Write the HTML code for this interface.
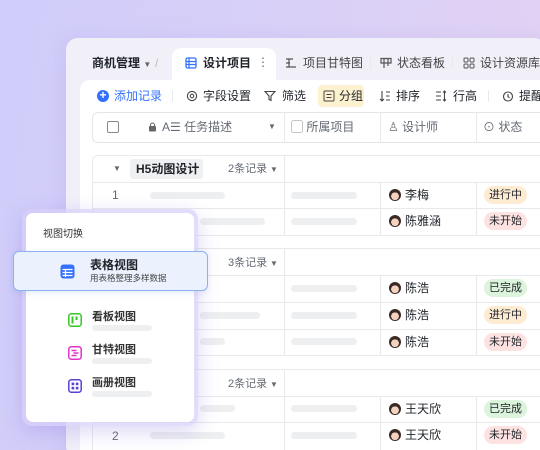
<!DOCTYPE html>
<html><head><meta charset="utf-8"><style>
*{margin:0;padding:0;box-sizing:border-box}
html,body{width:540px;height:450px;overflow:hidden}
body{position:relative;font-family:"Liberation Sans","Noto Sans CJK SC",sans-serif;background:linear-gradient(100deg,#cfcdfa 0%,#d9d0f7 50%,#e3d2f3 100%);color:#1f2329}
.a{position:absolute}
.win{left:66px;top:38px;width:480px;height:420px;background:#f1f0f9;border-radius:12px;box-shadow:0 4px 20px rgba(120,100,200,.15)}
.panel{left:80px;top:80px;width:460px;height:370px;background:#fff;border-radius:10px 0 0 0}
.t{font-size:12px;white-space:nowrap;line-height:14px}
.g{color:#646a73}
.bar{background:#eeeff1;height:7px;border-radius:4px}
.line{background:#e8e9eb;height:1px}
.vl{background:#e8e9eb;width:1px}
.tag{font-size:11px;line-height:18px;height:18px;padding:0 5px;border-radius:9px}
.av{width:12px;height:12px;border-radius:50%;background:radial-gradient(circle at 50% 60%,#f3d2bf 0 40%,#3a2a26 42%);}
</style></head><body>
<div class="a win"></div>
<!-- tabs -->
<div class="a t" style="left:92px;top:56px;font-weight:bold;font-size:12px">商机管理 <span style="font-size:8px;color:#666">▼</span></div>
<div class="a t" style="left:155px;top:56px;color:#bbb">/</div>
<div class="a" style="left:172px;top:48px;width:104px;height:34px;background:#fff;border-radius:9px 9px 0 0"></div>
<svg class="a" style="left:185px;top:57px" width="12" height="12" viewBox="0 0 12 12"><rect x="1" y="1" width="10" height="10" rx="1.5" fill="none" stroke="#3370ff" stroke-width="1.3"/><path d="M1 4.5H11M1 7.5H11M4 1V11" stroke="#3370ff" stroke-width="1.2"/></svg>
<div class="a t" style="left:203px;top:56px;font-weight:bold">设计项目</div>
<div class="a t g" style="left:257px;top:55px">⋮</div>
<svg class="a" style="left:285px;top:57px" width="12" height="12" viewBox="0 0 12 12"><path d="M1 2H8M1 6H5M1 10H11M4 2V10" stroke="#555" stroke-width="1.2" fill="none"/></svg>
<div class="a t g" style="left:303px;top:56px;color:#444">项目甘特图</div>
<div class="a vl" style="left:370px;top:55px;height:14px"></div>
<svg class="a" style="left:380px;top:57px" width="12" height="12" viewBox="0 0 12 12"><path d="M1 1.5H11V6H1ZM4 1.5V11M8 1.5V9" stroke="#555" stroke-width="1.2" fill="none"/></svg>
<div class="a t" style="left:397px;top:56px;color:#444">状态看板</div>
<div class="a vl" style="left:452px;top:55px;height:14px"></div>
<svg class="a" style="left:463px;top:57px" width="12" height="12" viewBox="0 0 12 12"><rect x="1" y="1" width="4" height="4" rx="1" fill="none" stroke="#555"/><rect x="7" y="1" width="4" height="4" rx="1" fill="none" stroke="#555"/><rect x="1" y="7" width="4" height="4" rx="1" fill="none" stroke="#555"/><rect x="7" y="7" width="4" height="4" rx="1" fill="none" stroke="#555"/></svg>
<div class="a t" style="left:480px;top:56px;color:#444">设计资源库</div>
<div class="a panel"></div>
<!-- toolbar -->
<div class="a" style="left:97px;top:90px;width:12px;height:12px;border-radius:50%;background:#3370ff;color:#fff;font-size:12px;line-height:11px;text-align:center;font-weight:bold">+</div>
<div class="a t" style="left:114px;top:89px;color:#3370ff">添加记录</div>
<div class="a vl" style="left:172px;top:90px;height:12px"></div>
<svg class="a" style="left:186px;top:90px" width="12" height="12" viewBox="0 0 12 12"><circle cx="6" cy="6" r="4.6" fill="none" stroke="#444" stroke-width="1.1"/><circle cx="6" cy="6" r="1.8" fill="none" stroke="#444" stroke-width="1.1"/></svg>
<div class="a t" style="left:203px;top:89px">字段设置</div>
<svg class="a" style="left:264px;top:90px" width="12" height="12" viewBox="0 0 12 12"><path d="M1 1.5H11L7 6V10.5L5 9.5V6Z" fill="none" stroke="#444" stroke-width="1.1"/></svg>
<div class="a t" style="left:282px;top:89px">筛选</div>
<div class="a" style="left:318px;top:85px;width:46px;height:22px;background:#fdf2d0;border-radius:4px"></div>
<svg class="a" style="left:323px;top:90px" width="12" height="12" viewBox="0 0 12 12"><rect x="1" y="1" width="10" height="10" rx="1" fill="none" stroke="#444"/><path d="M3.5 4.5H8.5M3.5 7.5H8.5" stroke="#444"/></svg>
<div class="a t" style="left:339px;top:89px">分组</div>
<svg class="a" style="left:379px;top:90px" width="12" height="12" viewBox="0 0 12 12"><path d="M3 1V11M1 9L3 11L5 9M7 2H11M7 6H10.5M7 10H11" fill="none" stroke="#444" stroke-width="1.1"/></svg>
<div class="a t" style="left:396px;top:89px">排序</div>
<svg class="a" style="left:435px;top:90px" width="12" height="12" viewBox="0 0 12 12"><path d="M1 2H6M1 6H6M1 10H6M9.5 1V11M8 2.5L9.5 1L11 2.5M8 9.5L9.5 11L11 9.5" fill="none" stroke="#444" stroke-width="1.1"/></svg>
<div class="a t" style="left:453px;top:89px">行高</div>
<div class="a vl" style="left:488px;top:90px;height:12px"></div>
<svg class="a" style="left:502px;top:90px" width="12" height="12" viewBox="0 0 12 12"><circle cx="6" cy="6.5" r="4.5" fill="none" stroke="#444" stroke-width="1.1"/><path d="M6 4V6.5L7.5 8" fill="none" stroke="#444" stroke-width="1.1"/></svg>
<div class="a t" style="left:519px;top:89px">提醒</div>
<!-- header -->
<div class="a" style="left:92px;top:112px;width:460px;height:31px;border:1px solid #e5e6e8;border-radius:6px;background:#fff"></div>
<div class="a" style="left:107px;top:121px;width:12px;height:12px;border:1px solid #888;border-radius:2px"></div>
<svg class="a" style="left:148px;top:122px" width="9" height="10" viewBox="0 0 9 10"><rect x="1" y="4" width="7" height="5.5" rx="1" fill="#666"/><path d="M2.5 4V3A2 2 0 0 1 6.5 3V4" fill="none" stroke="#666" stroke-width="1.1"/></svg>
<div class="a t g" style="left:162px;top:120px">A☰ 任务描述</div>
<div class="a t g" style="left:268px;top:120px;font-size:8px">▼</div>
<div class="a vl" style="left:284px;top:113px;height:29px"></div>
<div class="a t g" style="left:291px;top:120px">▢ 所属项目</div>
<div class="a vl" style="left:380px;top:113px;height:29px"></div>
<div class="a t g" style="left:388px;top:120px">♙ 设计师</div>
<div class="a vl" style="left:476px;top:113px;height:29px"></div>
<div class="a t g" style="left:483px;top:120px">⊙ 状态</div>
<!-- group 1 -->
<div class="a" style="left:92px;top:155px;width:460px;height:81px;border:1px solid #e8e9eb;border-radius:6px 0 0 0"></div>
<div class="a t g" style="left:113px;top:162px;font-size:8px">▼</div>
<div class="a" style="left:130px;top:159px;width:73px;height:20px;background:#eff0f1;border-radius:3px"></div>
<div class="a t" style="left:136px;top:162px;font-weight:bold">H5动图设计</div>
<div class="a t g" style="left:228px;top:162px;font-size:11px">2条记录</div>
<div class="a t g" style="left:270px;top:163px;font-size:8px">▼</div>
<div class="a vl" style="left:284px;top:156px;height:79px"></div>
<div class="a line" style="left:93px;top:182px;width:460px"></div>
<div class="a line" style="left:93px;top:208px;width:460px"></div>
<div class="a vl" style="left:380px;top:182px;height:53px"></div>
<div class="a vl" style="left:476px;top:182px;height:53px"></div>
<div class="a t g" style="left:112px;top:188px">1</div>
<div class="a bar" style="left:150px;top:192px;width:75px"></div>
<div class="a bar" style="left:200px;top:218px;width:65px"></div>
<div class="a bar" style="left:291px;top:192px;width:66px"></div>
<div class="a bar" style="left:291px;top:218px;width:66px"></div>
<div class="a av" style="left:389px;top:189px"></div><div class="a t" style="left:405px;top:188px">李梅</div>
<div class="a av" style="left:389px;top:215px"></div><div class="a t" style="left:405px;top:214px">陈雅涵</div>
<div class="a tag" style="left:484px;top:186px;background:#fdebd2">进行中</div>
<div class="a tag" style="left:484px;top:212px;background:#fde2e2">未开始</div>
<!-- group 2 -->
<div class="a" style="left:92px;top:248px;width:460px;height:108px;border:1px solid #e8e9eb"></div>
<div class="a t g" style="left:228px;top:256px;font-size:11px">3条记录</div>
<div class="a t g" style="left:270px;top:257px;font-size:8px">▼</div>
<div class="a vl" style="left:284px;top:249px;height:106px"></div>
<div class="a line" style="left:93px;top:275px;width:460px"></div>
<div class="a line" style="left:93px;top:302px;width:460px"></div>
<div class="a line" style="left:93px;top:329px;width:460px"></div>
<div class="a vl" style="left:380px;top:275px;height:80px"></div>
<div class="a vl" style="left:476px;top:275px;height:80px"></div>
<div class="a bar" style="left:200px;top:312px;width:60px"></div>
<div class="a bar" style="left:200px;top:338px;width:25px"></div>
<div class="a bar" style="left:291px;top:285px;width:66px"></div>
<div class="a bar" style="left:291px;top:312px;width:66px"></div>
<div class="a bar" style="left:291px;top:338px;width:66px"></div>
<div class="a av" style="left:389px;top:282px"></div><div class="a t" style="left:405px;top:281px">陈浩</div>
<div class="a av" style="left:389px;top:309px"></div><div class="a t" style="left:405px;top:308px">陈浩</div>
<div class="a av" style="left:389px;top:336px"></div><div class="a t" style="left:405px;top:335px">陈浩</div>
<div class="a tag" style="left:484px;top:279px;background:#dcf3dc">已完成</div>
<div class="a tag" style="left:484px;top:306px;background:#fdebd2">进行中</div>
<div class="a tag" style="left:484px;top:333px;background:#fde2e2">未开始</div>
<!-- group 3 -->
<div class="a" style="left:92px;top:369px;width:460px;height:90px;border:1px solid #e8e9eb"></div>
<div class="a t g" style="left:228px;top:377px;font-size:11px">2条记录</div>
<div class="a t g" style="left:270px;top:378px;font-size:8px">▼</div>
<div class="a vl" style="left:284px;top:370px;height:80px"></div>
<div class="a line" style="left:93px;top:396px;width:460px"></div>
<div class="a line" style="left:93px;top:422px;width:460px"></div>
<div class="a vl" style="left:380px;top:396px;height:54px"></div>
<div class="a vl" style="left:476px;top:396px;height:54px"></div>
<div class="a t g" style="left:112px;top:429px">2</div>
<div class="a bar" style="left:200px;top:405px;width:35px"></div>
<div class="a bar" style="left:150px;top:432px;width:75px"></div>
<div class="a bar" style="left:291px;top:405px;width:66px"></div>
<div class="a bar" style="left:291px;top:432px;width:66px"></div>
<div class="a av" style="left:389px;top:403px"></div><div class="a t" style="left:405px;top:402px">王天欣</div>
<div class="a av" style="left:389px;top:429px"></div><div class="a t" style="left:405px;top:428px">王天欣</div>
<div class="a tag" style="left:484px;top:400px;background:#dcf3dc">已完成</div>
<div class="a tag" style="left:484px;top:426px;background:#fde2e2">未开始</div>
<!-- popup -->
<div class="a" style="left:22px;top:209px;width:176px;height:217px;border-radius:10px;background:rgba(215,205,250,.7);box-shadow:0 6px 20px rgba(120,100,220,.25)"></div>
<div class="a" style="left:26px;top:213px;width:168px;height:209px;border-radius:7px;background:#fff"></div>
<div class="a t" style="left:43px;top:228px;font-size:10px;color:#333">视图切换</div>
<div class="a" style="left:13px;top:251px;width:195px;height:40px;border:1px solid #8db0ef;border-radius:6px;background:#ebf2fd;box-shadow:0 2px 6px rgba(80,120,220,.15)"></div>
<svg class="a" style="left:60px;top:264px" width="15" height="15" viewBox="0 0 15 15"><rect x="0.5" y="0.5" width="14" height="14" rx="3" fill="#3370ff"/><path d="M2.5 5.5H12.5M2.5 8.5H12.5M2.5 11.5H12.5M5.5 5V13" stroke="#fff" stroke-width="1.2"/></svg>
<div class="a t" style="left:90px;top:258px;font-size:12px;font-weight:bold">表格视图</div>
<div class="a t" style="left:90px;top:273px;font-size:8.5px;line-height:10px;color:#444">用表格整理多样数据</div>
<svg class="a" style="left:68px;top:313px" width="14" height="14" viewBox="0 0 14 14"><rect x="0.8" y="0.8" width="12.4" height="12.4" rx="2.5" fill="none" stroke="#34c724" stroke-width="1.5"/><path d="M4.5 3.5V10.5M8.5 3.5V7" stroke="#34c724" stroke-width="2"/></svg>
<div class="a t" style="left:92px;top:310px;font-size:11px;font-weight:bold;color:#333">看板视图</div>
<div class="a bar" style="left:92px;top:325px;width:60px;height:6px"></div>
<svg class="a" style="left:68px;top:346px" width="14" height="14" viewBox="0 0 14 14"><rect x="0.8" y="0.8" width="12.4" height="12.4" rx="2.5" fill="none" stroke="#e332c8" stroke-width="1.5"/><path d="M3.5 4.5H8.5M5.5 7H10.5M3.5 9.5H8.5" stroke="#e332c8" stroke-width="1.4"/></svg>
<div class="a t" style="left:92px;top:343px;font-size:11px;font-weight:bold;color:#333">甘特视图</div>
<div class="a bar" style="left:92px;top:358px;width:60px;height:6px"></div>
<svg class="a" style="left:68px;top:379px" width="14" height="14" viewBox="0 0 14 14"><rect x="0.8" y="0.8" width="12.4" height="12.4" rx="2.5" fill="none" stroke="#5b3fd6" stroke-width="1.5"/><rect x="3.6" y="3.6" width="2.6" height="2.6" fill="#5b3fd6"/><rect x="7.8" y="3.6" width="2.6" height="2.6" fill="#5b3fd6"/><rect x="3.6" y="7.8" width="2.6" height="2.6" fill="#5b3fd6"/><rect x="7.8" y="7.8" width="2.6" height="2.6" fill="#5b3fd6"/></svg>
<div class="a t" style="left:92px;top:376px;font-size:11px;font-weight:bold;color:#333">画册视图</div>
<div class="a bar" style="left:92px;top:391px;width:60px;height:6px"></div>
</body></html>
